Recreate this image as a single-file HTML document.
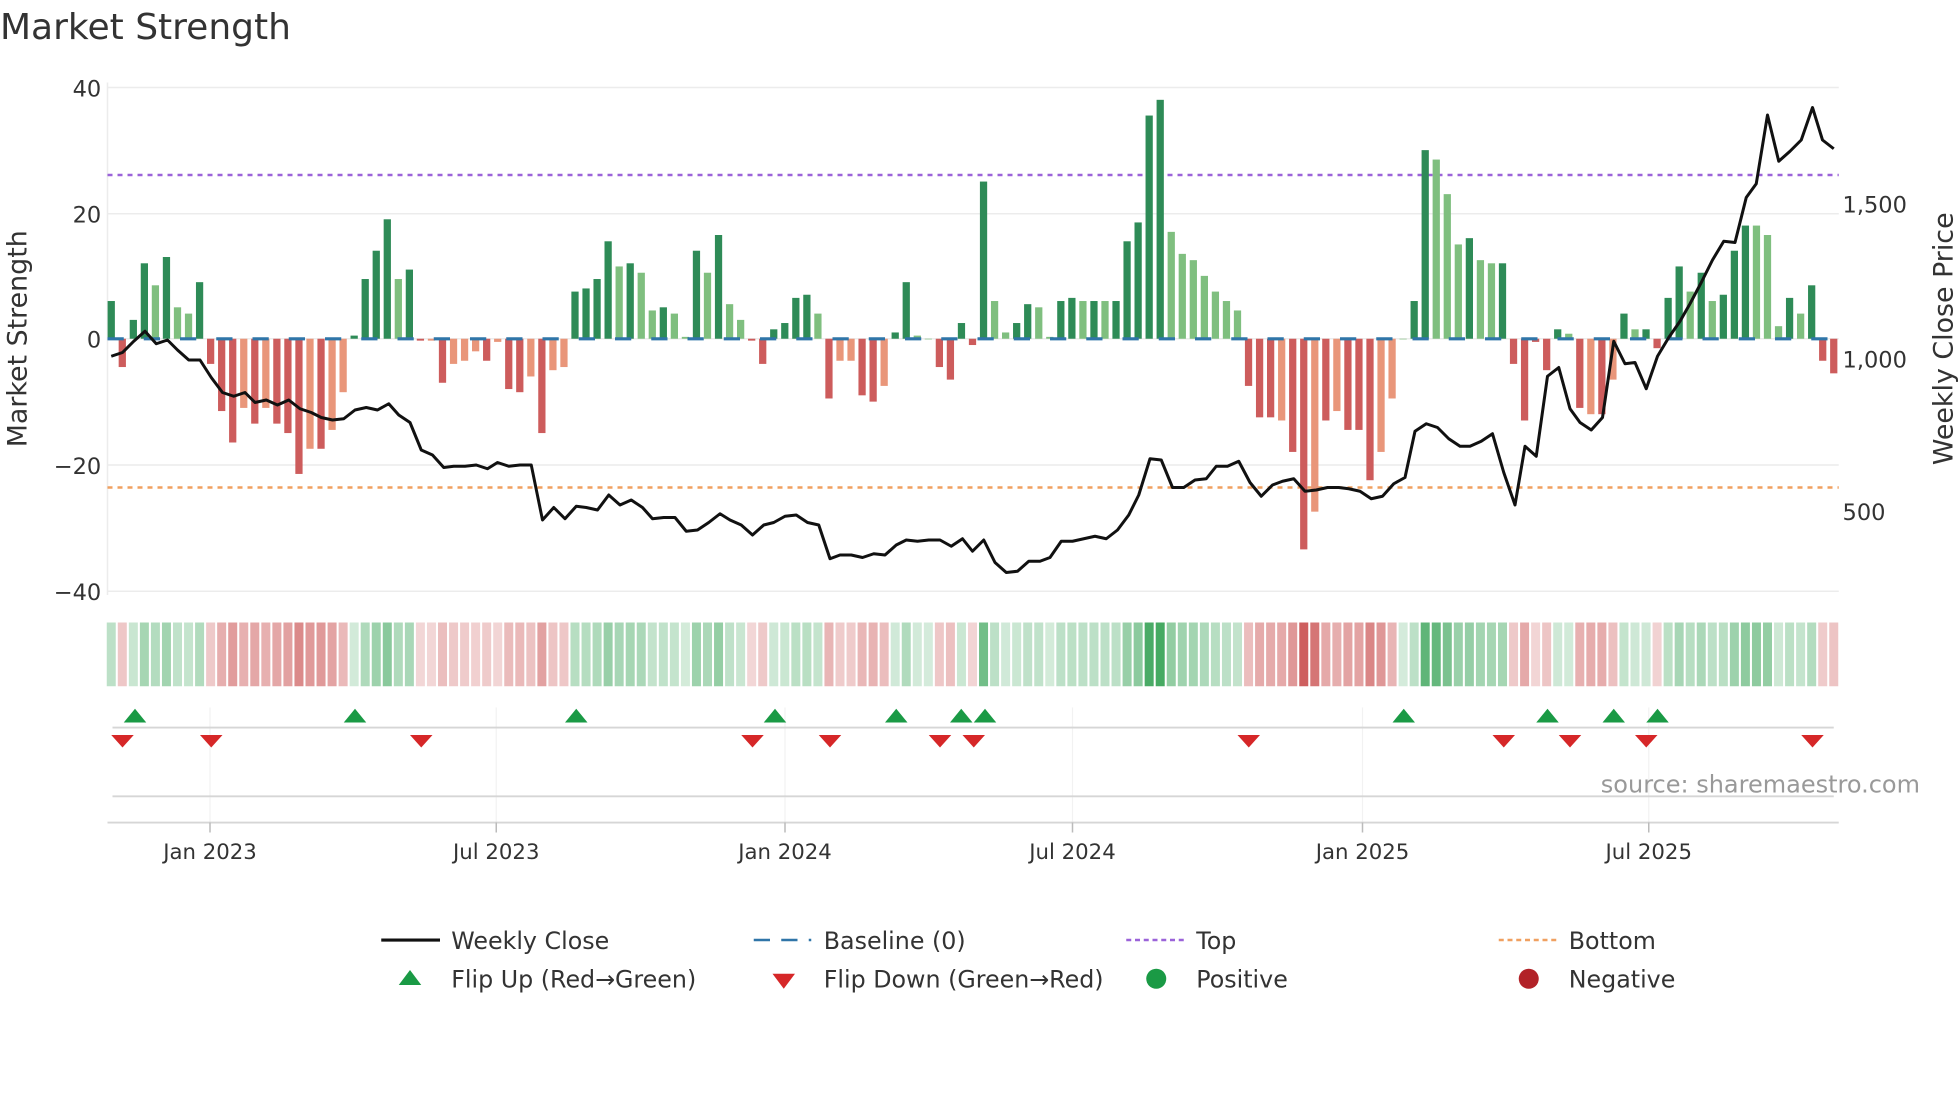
<!DOCTYPE html>
<html><head><meta charset="utf-8"><style>
html,body{margin:0;padding:0;background:#fff;width:1960px;height:1102px;overflow:hidden}
svg{display:block}
text{font-family:"DejaVu Sans","Liberation Sans",sans-serif;fill:#333}
</style></head><body>
<svg id="s" width="1960" height="1102" viewBox="0 0 1568 881.6" xmlns="http://www.w3.org/2000/svg">
<text x="0" y="31" font-size="28.8">Market Strength</text>
<g stroke="#ececec" stroke-width="1.2">
<line x1="86" y1="70" x2="1471" y2="70"/><line x1="86" y1="171" x2="1471" y2="171"/>
<line x1="86" y1="372" x2="1471" y2="372"/><line x1="86" y1="473" x2="1471" y2="473"/>
<line x1="86" y1="271" x2="1471" y2="271"/>
<line x1="86" y1="66" x2="86" y2="476"/>
</g>
<g stroke="#f2f2f2" stroke-width="1">
<line x1="168" y1="566" x2="168" y2="658"/><line x1="397" y1="566" x2="397" y2="658"/>
<line x1="628" y1="566" x2="628" y2="658"/><line x1="858" y1="566" x2="858" y2="658"/>
<line x1="1090" y1="566" x2="1090" y2="658"/><line x1="1319" y1="566" x2="1319" y2="658"/>
</g>
<g font-size="18" text-anchor="end">
<text x="81" y="77">40</text><text x="81" y="178">20</text><text x="81" y="278">0</text>
<text x="81" y="379">−20</text><text x="81" y="480">−40</text>
</g>
<g font-size="18">
<text x="1474" y="170">1,500</text><text x="1474" y="294">1,000</text><text x="1474" y="416">500</text>
</g>
<text transform="translate(21,271) rotate(-90)" font-size="21.5" text-anchor="middle">Market Strength</text>
<text transform="translate(1562,271) rotate(-90)" font-size="21.5" text-anchor="middle">Weekly Close Price</text>
<line x1="86" y1="140" x2="1471" y2="140" stroke="#9b63d9" stroke-width="2" stroke-dasharray="4,4"/>
<line x1="86" y1="390" x2="1471" y2="390" stroke="#f0a060" stroke-width="2" stroke-dasharray="4,4"/>
<g id="bars"></g>
<line x1="86" y1="271" x2="1471" y2="271" stroke="#2f75a8" stroke-width="2.5" stroke-dasharray="13,16"/>
<polyline id="price" fill="none" stroke="#111" stroke-width="2.4" stroke-linejoin="round"/>
<g id="strip"></g>
<line x1="90" y1="582" x2="1467" y2="582" stroke="#d6d6d6" stroke-width="1.5"/>
<g id="flips"></g>
<line x1="90" y1="637" x2="1467" y2="637" stroke="#d6d6d6" stroke-width="1.5"/>
<line x1="86" y1="658" x2="1471" y2="658" stroke="#d6d6d6" stroke-width="1.5"/>
<text x="1536" y="634" font-size="19.2" text-anchor="end" style="fill:#999">source: sharemaestro.com</text>
<g stroke="#bbb" stroke-width="1.2">
<line x1="168" y1="658" x2="168" y2="666"/><line x1="397" y1="658" x2="397" y2="666"/>
<line x1="628" y1="658" x2="628" y2="666"/><line x1="858" y1="658" x2="858" y2="666"/>
<line x1="1090" y1="658" x2="1090" y2="666"/><line x1="1319" y1="658" x2="1319" y2="666"/>
</g>
<g font-size="17" text-anchor="middle">
<text x="168" y="687">Jan 2023</text><text x="397" y="687">Jul 2023</text><text x="628" y="687">Jan 2024</text>
<text x="858" y="687">Jul 2024</text><text x="1090" y="687">Jan 2025</text><text x="1319" y="687">Jul 2025</text>
</g>
<g font-size="19">
<line x1="305" y1="752" x2="352" y2="752" stroke="#111" stroke-width="2.5"/><text x="361" y="759">Weekly Close</text>
<line x1="603" y1="752" x2="649" y2="752" stroke="#2f75a8" stroke-width="2" stroke-dasharray="13,9"/><text x="659" y="759">Baseline (0)</text>
<line x1="901" y1="752" x2="947" y2="752" stroke="#9b63d9" stroke-width="2" stroke-dasharray="4,3"/><text x="957" y="759">Top</text>
<line x1="1199" y1="752" x2="1245" y2="752" stroke="#f0a060" stroke-width="2" stroke-dasharray="4,3"/><text x="1255" y="759">Bottom</text>
<polygon points="319,788 337,788 328,776" fill="#1a9a45"/><text x="361" y="790">Flip Up (Red→Green)</text>
<polygon points="618,779 636,779 627,791" fill="#d62728"/><text x="659" y="790">Flip Down (Green→Red)</text>
<circle cx="925" cy="783" r="8" fill="#1a9a45"/><text x="957" y="790">Positive</text>
<circle cx="1223" cy="783" r="8" fill="#b22228"/><text x="1255" y="790">Negative</text>
</g>
</svg>
<script>
var V=[[6,1],[-4.5,1],[3,1],[12,1],[8.5,0],[13,1],[5,0],[4,0],[9,1],[-4,1],[-11.5,1],[-16.5,1],[-11,0],[-13.5,1],[-11,0],[-13.5,1],[-15,1],[-21.5,1],[-17.5,0],[-17.5,1],[-14.5,0],[-8.5,0],[0.5,1],[9.5,1],[14,1],[19,1],[9.5,0],[11,1],[-0.3,1],[-0.3,0],[-7,1],[-4,0],[-3.5,0],[-2,0],[-3.5,1],[-0.5,0],[-8,1],[-8.5,1],[-6,0],[-15,1],[-5,0],[-4.5,0],[7.5,1],[8,1],[9.5,1],[15.5,1],[11.5,0],[12,1],[10.5,0],[4.5,0],[5,1],[4,0],[0.3,0],[14,1],[10.5,0],[16.5,1],[5.5,0],[3,0],[-0.3,1],[-4,1],[1.5,1],[2.5,1],[6.5,1],[7,1],[4,0],[-9.5,1],[-3.5,0],[-3.5,0],[-9,1],[-10,1],[-7.5,0],[1,1],[9,1],[0.5,0],[0,0],[-4.5,1],[-6.5,1],[2.5,1],[-1,1],[25,1],[6,0],[1,0],[2.5,1],[5.5,1],[5,0],[0.3,0],[6,1],[6.5,1],[6,0],[6,1],[6,0],[6,1],[15.5,1],[18.5,1],[35.5,1],[38,1],[17,0],[13.5,0],[12.5,0],[10,0],[7.5,0],[6,0],[4.5,0],[-7.5,1],[-12.5,1],[-12.5,1],[-13,0],[-18,1],[-33.5,1],[-27.5,0],[-13,1],[-11.5,0],[-14.5,1],[-14.5,1],[-22.5,1],[-18,0],[-9.5,0],[0,0],[6,1],[30,1],[28.5,0],[23,0],[15,0],[16,1],[12.5,0],[12,0],[12,1],[-4,1],[-13,1],[-0.5,1],[-5,1],[1.5,1],[0.8,0],[-11,1],[-12,0],[-12,1],[-6.5,0],[4,1],[1.5,0],[1.5,1],[-1.5,1],[6.5,1],[11.5,1],[7.5,0],[10.5,1],[6,0],[7,1],[14,1],[18,1],[18,0],[16.5,0],[2,0],[6.5,1],[4,0],[8.5,1],[-3.5,1],[-5.5,1]];
var ns="http://www.w3.org/2000/svg";
function el(p,t,a){var e=document.createElementNS(ns,t);for(var k in a)e.setAttribute(k,a[k]);p.appendChild(e);return e;}
var bars=document.getElementById('bars'),strip=document.getElementById('strip');
var n=V.length,step=(1467-89)/(n-1);
for(var i=0;i<n;i++){var v=V[i][0],d=V[i][1],x=89+i*step;var h=Math.abs(v)*5.03;
var c=v>=0?(d?'#2e8b57':'#7fbf7f'):(d?'#cd5c5c':'#e9967a');
el(bars,'rect',{x:x-2.9,y:v>=0?271-h:271,width:5.8,height:Math.max(h,0.5),fill:c});
var a=Math.min(0.95,0.22+Math.abs(v)/40*0.8);
el(strip,'rect',{x:x-3.6,y:498,width:7.2,height:51,fill:v>=0?'rgb(60,165,90)':'rgb(200,75,75)','fill-opacity':a});}
var P=[[89,285],[98,282],[107,273],[116,265],[125,275],[134,272],[142,280],[151,288],[160,288],[169,302],[178,314],[187,317],[196,314],[204,322],[213,320],[222,324],[231,320],[240,327],[249,330],[257,334],[266,336],[275,335],[284,328],[293,326],[302,328],[311,323],[319,332],[328,338],[337,360],[346,364],[355,374],[363,373],[372,373],[381,372],[390,375],[398,370],[407,373],[416,372],[425,372],[434,416],[443,406],[452,415],[461,405],[469,406],[478,408],[487,396],[496,404],[505,400],[514,406],[522,415],[531,414],[540,414],[549,425],[558,424],[567,418],[576,411],[584,416],[593,420],[602,428],[611,420],[619,418],[628,413],[637,412],[646,418],[655,420],[664,447],[672,444],[681,444],[690,446],[699,443],[708,444],[717,436],[725,432],[734,433],[743,432],[752,432],[761,437],[770,431],[778,441],[787,432],[796,450],[805,458],[814,457],[823,449],[832,449],[840,446],[849,433],[858,433],[867,431],[876,429],[885,431],[894,424],[903,412],[911,396],[920,367],[929,368],[938,390],[947,390],[956,384],[965,383],[973,373],[982,373],[991,369],[1000,386],[1009,397],[1018,388],[1026,385],[1035,383],[1044,393],[1053,392],[1062,390],[1071,390],[1079,391],[1088,393],[1097,399],[1106,397],[1115,387],[1124,382],[1132,345],[1141,339],[1150,342],[1159,351],[1168,357],[1176,357],[1185,353],[1194,347],[1203,378],[1212,404],[1220,357],[1229,365],[1238,301],[1247,294],[1256,327],[1264,338],[1273,344],[1282,334],[1291,273],[1300,291],[1308,290],[1317,311],[1326,285],[1335,270],[1344,257],[1352,243],[1361,226],[1370,208],[1379,193],[1388,194],[1397,158],[1405,147],[1414,92],[1423,129],[1432,121],[1441,112],[1450,86],[1458,112],[1467,119]];
document.getElementById('price').setAttribute('points',P.map(function(p){return p.join(',')}).join(' '));
var f=document.getElementById('flips');
[108,284,461,620,717,769,788,1123,1238,1291,1326].forEach(function(x){el(f,'polygon',{points:(x-9)+',578 '+(x+9)+',578 '+x+',567',fill:'#1a9a45'});});
[98,169,337,602,664,752,779,999,1203,1256,1317,1450].forEach(function(x){el(f,'polygon',{points:(x-9)+',588 '+(x+9)+',588 '+x+',598',fill:'#d62728'});});
</script>
</body></html>
